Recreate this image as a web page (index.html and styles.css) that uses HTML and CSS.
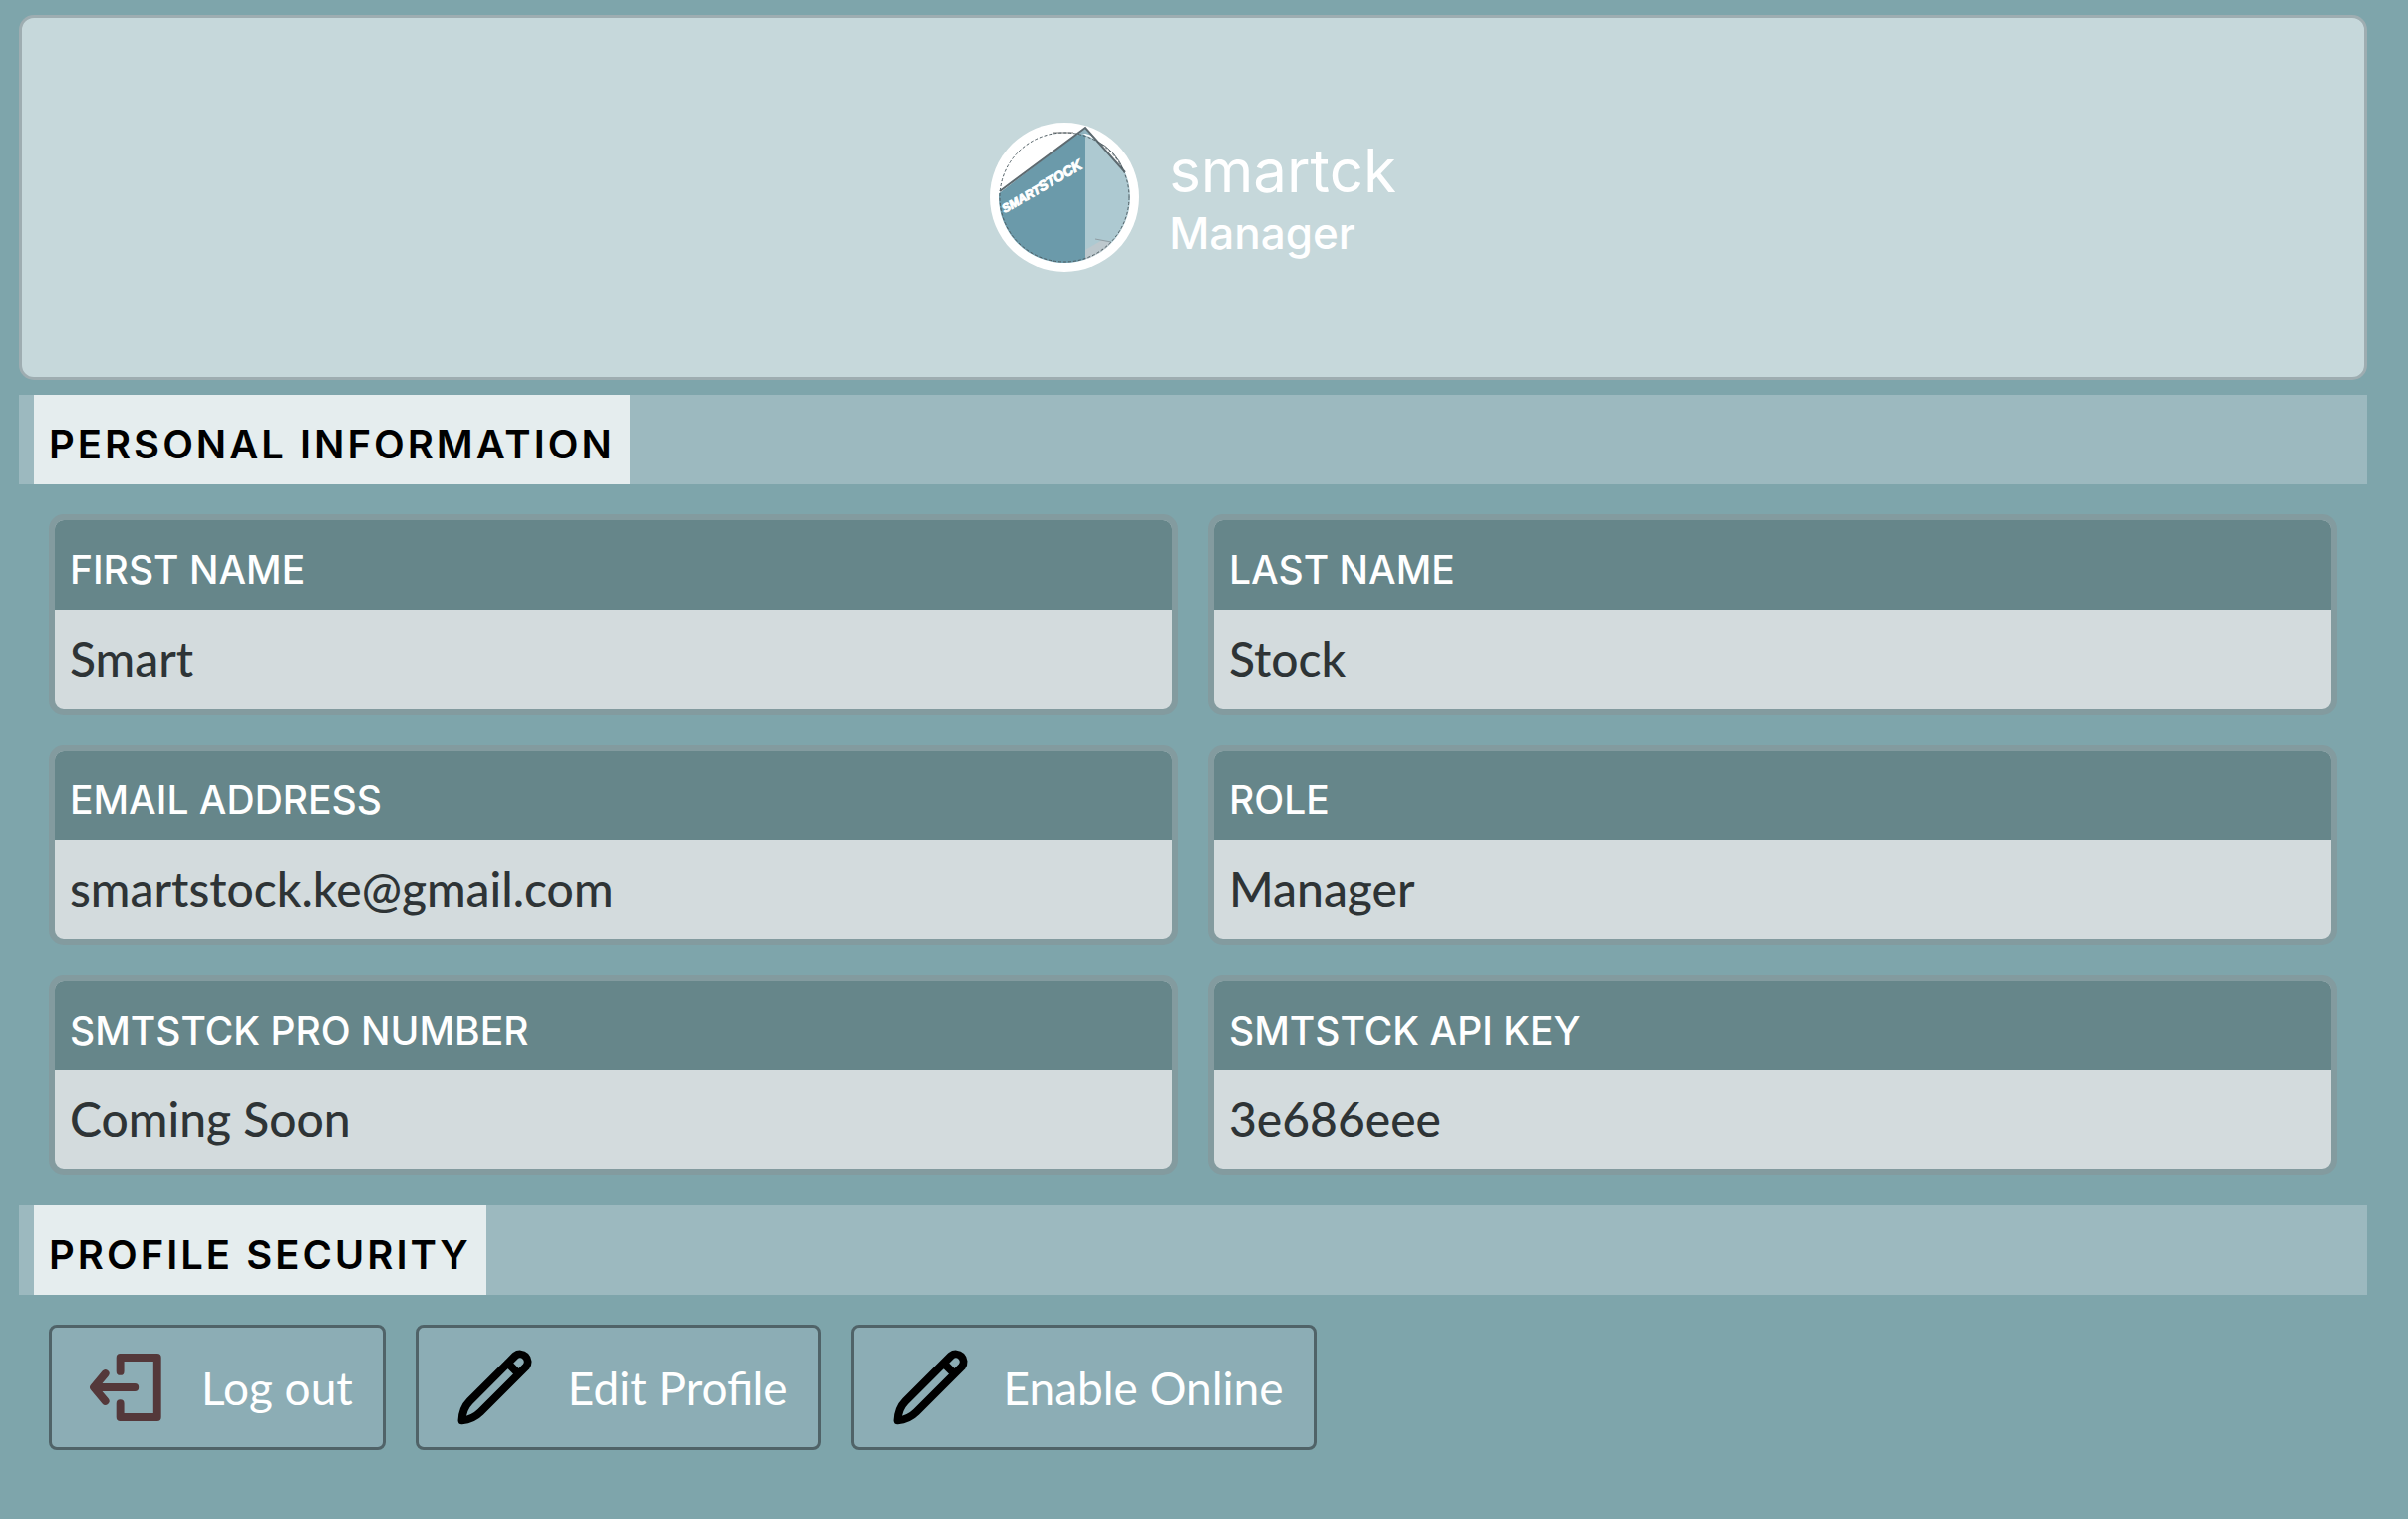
FILE: index.html
```
<!DOCTYPE html>
<html lang="en">
<head>
    <meta charset="UTF-8">
    <meta name="viewport" content="width=device-width, initial-scale=1.0">
    <title>Profile</title>
    <link rel="stylesheet" href="styles.css">
</head>
<body>
    <div class="profile">
        <svg class="avatar" viewBox="0 0 150 150" role="img" aria-label="Smartstock">
            <defs>
                <clipPath id="round"><circle cx="75" cy="75" r="66"/></clipPath>
            </defs>
            <circle cx="75" cy="75" r="75" fill="#fff"/>
            <g clip-path="url(#round)">
                <path d="M0 78 L96 5 V150 H0Z" fill="#6b9aaa"/>
                <path d="M96 5 L150 66 V150 H96Z" fill="#adc9d1"/>
                <path d="M96 128 L113 118 L122 121 V150 H96Z" fill="#bdc8cd"/>
                <path d="M106 117 L122 120" fill="none" stroke="#8f9ca2" stroke-width="1"/>
            </g>
            <path d="M86 13 L96 5 L105 15 Q101 12 96 11Z" fill="#8fb3bf"/>
            <path d="M10 69 L96 5 L136 50" fill="none" stroke="#5d6a70" stroke-width="2"/>
            <path d="M107 18 Q127 28 135 49" fill="none" stroke="#5d6a70" stroke-width="1"/>
            <path d="M64 10 H84" stroke="#777" stroke-width="1"/>
            <circle cx="75" cy="75" r="65" fill="none" stroke="#4f5d63" stroke-width="1" stroke-dasharray="3 2"/>
            <text class="avatar-text" transform="translate(15 91) rotate(-30)"><tspan font-size="12">SMART</tspan><tspan font-size="14">STOCK</tspan></text>
        </svg>
        <div>
            <h1>smartck</h1>
            <p>Manager</p>
        </div>
    </div>

    <div class="section">
        <h2>PERSONAL INFORMATION</h2>
    </div>
    <div class="container">
        <div class="card">
            <h3>FIRST NAME</h3>
            <p>Smart</p>
        </div>
        <div class="card">
            <h3>LAST NAME</h3>
            <p>Stock</p>
        </div>
        <div class="card">
            <h3>EMAIL ADDRESS</h3>
            <p>smartstock.ke@gmail.com</p>
        </div>
        <div class="card">
            <h3>ROLE</h3>
            <p>Manager</p>
        </div>
        <div class="card">
            <h3>SMTSTCK PRO NUMBER</h3>
            <p>Coming Soon</p>
        </div>
        <div class="card">
            <h3>SMTSTCK API KEY</h3>
            <p>3e686eee</p>
        </div>
    </div>

    <div class="section">
        <h2>PROFILE SECURITY</h2>
    </div>
    <div class="actions">
        <button type="button">
            <svg class="icon logout" viewBox="0 0 24 24" aria-hidden="true">
                <path d="M10.3 7.7V4H20.2V20H10.3V16.3M14.2 12H3.3M6.3 8.3L3.2 12L6.3 15.7"/>
            </svg>
            Log out
        </button>
        <button type="button">
            <svg class="icon" viewBox="0 0 24 24" aria-hidden="true">
                <path d="M3.6 20.9C3.7 18.7 4.3 17.1 5.7 15.7L17.9 3.5A2.07 2.07 0 0 1 20.8 6.4L8.6 18.6C7.2 20 5.8 20.7 3.6 20.9ZM15.9 5.5L18.8 8.4"/>
            </svg>
            Edit Profile
        </button>
        <button type="button">
            <svg class="icon" viewBox="0 0 24 24" aria-hidden="true">
                <path d="M3.6 20.9C3.7 18.7 4.3 17.1 5.7 15.7L17.9 3.5A2.07 2.07 0 0 1 20.8 6.4L8.6 18.6C7.2 20 5.8 20.7 3.6 20.9ZM15.9 5.5L18.8 8.4"/>
            </svg>
            Enable Online
        </button>
    </div>
</body>
</html>
```
FILE: styles.css
```
*{
    box-sizing: border-box;
}
body{
    margin: 0;
    padding: 15px 41px 15px 19px;
    background: #7ea5ab;
    font-family: Inter, "Liberation Sans", sans-serif;
}
h1,h2,h3,p{
    margin: 0;
    font-weight: 400;
}
.profile{
    display: flex;
    align-items: center;
    justify-content: center;
    gap: 30px;
    padding: 105px 15px;
    border: 3px solid #9eadb1;
    border-radius: 15px;
    background: #c6d8db;
    color: white;
}
.avatar{
    width: 150px;
    height: 150px;
}
.avatar-text{
    font-family: "Liberation Sans", sans-serif;
    font-weight: 700;
    font-style: italic;
    fill: white;
    stroke: white;
    stroke-width: 1;
}
.profile h1{
    font-size: 60px;
    line-height: 72px;
}
.profile p{
    font-size: 44px;
    font-weight: 500;
    line-height: 54px;
}
.section{
    display: flex;
    margin-top: 15px;
    padding-left: 15px;
    background: #9cb9bf;
}
.section h2{
    padding: 24px 15px 15px;
    background: #e5edee;
    color: black;
    font-size: 40px;
    font-weight: 600;
    line-height: 51px;
    letter-spacing: 3px;
}
.container{
    display: grid;
    grid-template-columns: 1fr 1fr;
    gap: 30px;
    padding: 30px 30px 15px;
}
.card{
    border: 6px solid #839b9f;
    border-radius: 15px;
    overflow: hidden;
    background: #d3dbdd;
}
.card h3{
    padding: 24px 15px 15px;
    background: #66868a;
    color: white;
    font-size: 39px;
    font-weight: 500;
    line-height: 51px;
}
.card p{
    padding: 14px 15px 16px;
    color: #2e3436;
    font-family: Lato, "Liberation Sans", sans-serif;
    font-size: 48px;
    font-weight: 500;
    line-height: 69px;
}
.actions{
    display: flex;
    flex-wrap: wrap;
    gap: 30px;
    padding: 30px;
}
.actions button{
    display: flex;
    align-items: center;
    gap: 30px;
    padding: 15px 30px;
    border: 3px solid #506368;
    border-radius: 8px;
    background: #8cadb5;
    color: white;
    font-family: Lato, "Liberation Sans", sans-serif;
    font-size: 46px;
}
.icon{
    width: 90px;
    height: 90px;
    fill: none;
    stroke: black;
    stroke-width: 2.1;
    stroke-linecap: round;
    stroke-linejoin: round;
}
.logout{
    stroke: #54383a;
}
```
